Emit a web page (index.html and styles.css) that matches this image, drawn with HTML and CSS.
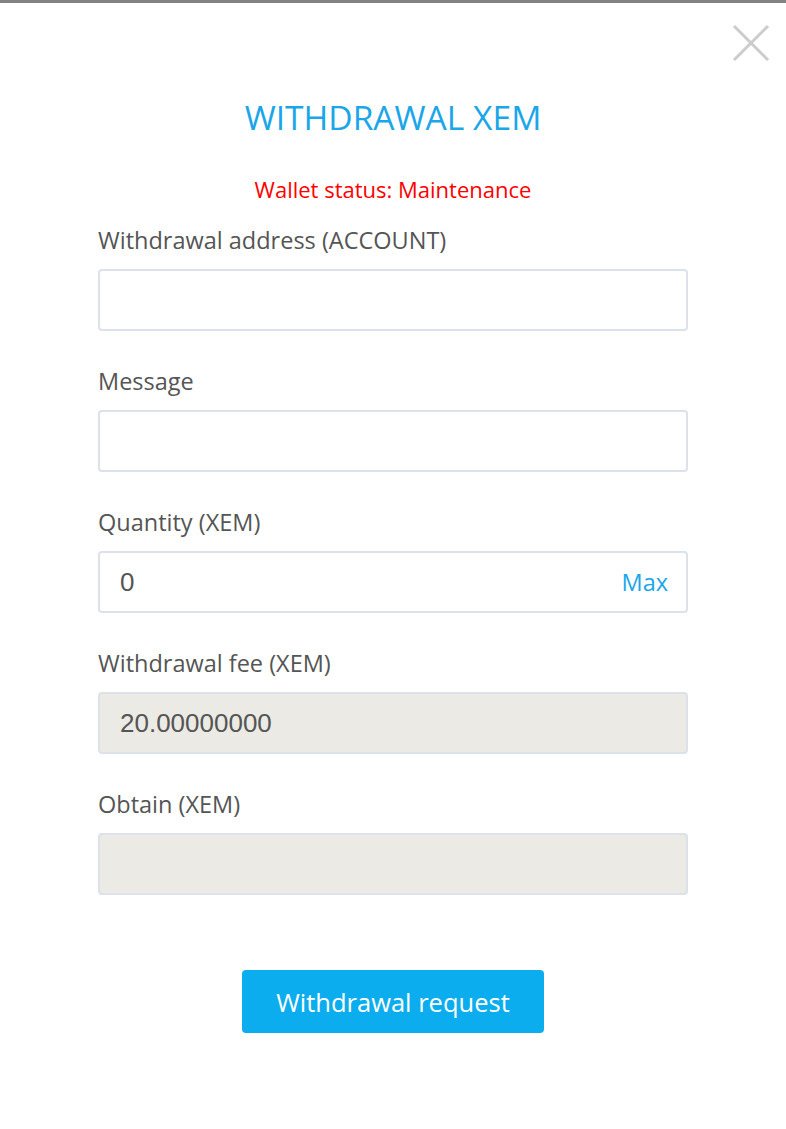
FILE: index.html
```html
<!DOCTYPE html>
<html>
<head>
<meta charset="utf-8">
<link rel="stylesheet" href="styles.css">
</head>
<body>
<div class="modal">
  <button class="close" aria-label="Close">
    <svg width="38" height="38" viewBox="0 0 38 38"><path d="M2 2 L36 36 M36 2 L2 36" stroke="#cccccc" stroke-width="3" fill="none"/></svg>
  </button>
  <h1 class="title">WITHDRAWAL XEM</h1>
  <p class="status">Wallet status: Maintenance</p>
  <form class="form">
    <div class="field">
      <label class="label">Withdrawal address (ACCOUNT)</label>
      <div class="input"></div>
    </div>
    <div class="field">
      <label class="label">Message</label>
      <div class="input"></div>
    </div>
    <div class="field">
      <label class="label">Quantity (XEM)</label>
      <div class="input"><span class="value">0</span><span class="max">Max</span></div>
    </div>
    <div class="field">
      <label class="label">Withdrawal fee (XEM)</label>
      <div class="input disabled"><span class="value">20.00000000</span></div>
    </div>
    <div class="field">
      <label class="label">Obtain (XEM)</label>
      <div class="input disabled"></div>
    </div>
    <div class="actions">
      <button type="button" class="submit">Withdrawal request</button>
    </div>
  </form>
</div>
</body>
</html>
```
FILE: styles.css
```css
html, body {
  margin: 0;
  padding: 0;
  background: #ffffff;
}
.modal {
  position: relative;
  box-sizing: border-box;
  height: 1129px;
  border-top: 3px solid #828282;
  font-family: "Open Sans", sans-serif;
  color: #555555;
}
.close {
  position: absolute;
  top: 21px;
  right: 16px;
  width: 38px;
  height: 38px;
  padding: 0;
  border: 0;
  background: none;
}
.close svg { display: block; }
.title {
  margin: 94px 0 0;
  font-size: 33.6px;
  line-height: 40px;
  font-weight: 400;
  color: #1ba6e9;
  text-align: center;
}
.status {
  margin: 37px 0 0;
  font-size: 22px;
  line-height: 30px;
  color: #ff0000;
  text-align: center;
}
.form {
  margin: 21px 98px 0;
  display: flex;
  flex-direction: column;
}
.field {
  display: flex;
  flex-direction: column;
  gap: 14px;
  margin-bottom: 35px;
}
.label {
  font-size: 23.5px;
  line-height: 30px;
  color: #555555;
}
.input {
  box-sizing: border-box;
  height: 62px;
  border: 2px solid #dde1ea;
  border-radius: 4px;
  padding: 0 18px 0 20px;
  display: flex;
  align-items: center;
  justify-content: space-between;
  background: #ffffff;
}
.input.disabled {
  background: #ebeae4;
}
.value {
  font-family: "Liberation Sans", Arial, sans-serif;
  font-size: 26px;
  color: #555555;
}
.max {
  font-size: 23.5px;
  color: #1ba6e9;
}
.actions {
  display: flex;
  justify-content: center;
  margin-top: 40px;
}
.submit {
  width: 302px;
  height: 63px;
  border: 0;
  border-radius: 4px;
  background: #0badef;
  color: #ffffff;
  font-family: "Open Sans", sans-serif;
  font-size: 25.5px;
}
```
